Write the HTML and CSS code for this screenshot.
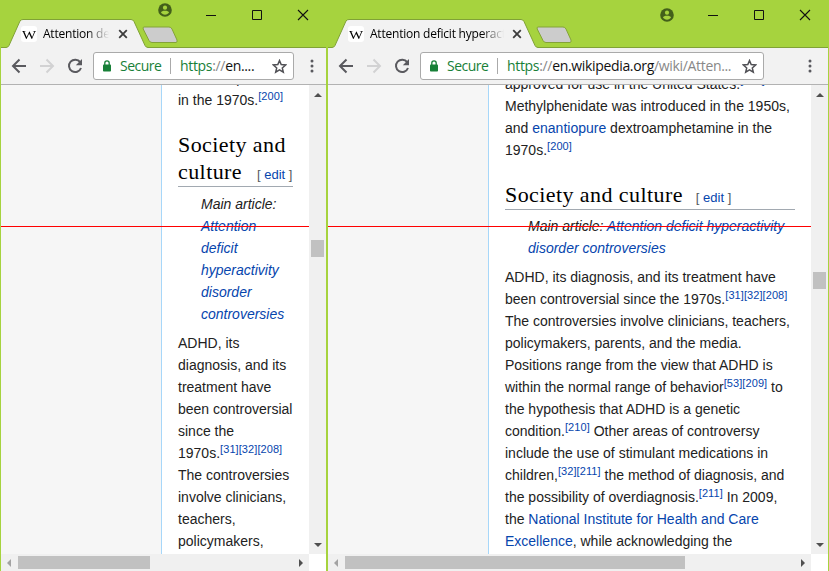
FILE: index.html
```
<!DOCTYPE html>
<html lang="en">
<head>
<meta charset="utf-8">
<title>Attention deficit hyperactivity disorder</title>
<link rel="stylesheet" href="styles.css">
</head>
<body>
<svg class="defs" width="0" height="0">
  <symbol id="user" viewBox="0 0 14 14"><circle cx="7" cy="7" r="6.8" fill="#43601a"/><circle cx="7" cy="4.7" r="2.1" fill="#a6d33e"/><path d="M3 9.7C3.3 7.2 10.7 7.2 11 9.7Q7 13.6 3 9.7Z" fill="#a6d33e"/></symbol>
  <symbol id="min" viewBox="0 0 12 12"><path d="M1 6.5H11" stroke="#111"/></symbol>
  <symbol id="max" viewBox="0 0 12 12"><path d="M1.5 1.5H10.5V10.5H1.5Z" fill="none" stroke="#111"/></symbol>
  <symbol id="close" viewBox="0 0 12 12"><path d="M1 1L11 11M11 1L1 11" fill="none" stroke="#111" stroke-width="1.1"/></symbol>
  <symbol id="tabclose" viewBox="0 0 10 10"><path d="M1.2 1.2L8.8 8.8M8.8 1.2L1.2 8.8" fill="none" stroke="#3c3c3c" stroke-width="1.8"/></symbol>
  <symbol id="back" viewBox="0 0 16 16"><path d="M15 8H2.5M8.5 1.5L2 8L8.5 14.5" fill="none" stroke="currentColor" stroke-width="2"/></symbol>
  <symbol id="reload" viewBox="0 0 16 16"><path d="M13.2 4.2A6.2 6.2 0 1 0 14 10" fill="none" stroke="#5a5a5f" stroke-width="2"/><path d="M15 1V7.2H8.8Z" fill="#5a5a5f"/></symbol>
  <symbol id="lock" viewBox="0 0 10 12"><rect x="1" y="4.5" width="8" height="7" rx=".8" fill="#188038"/><path d="M2.8 5V3A2.2 2.2 0 0 1 7.2 3V5" fill="none" stroke="#188038" stroke-width="1.3"/></symbol>
  <symbol id="star" viewBox="0 0 15 15"><path d="M7.5 1.6L9.2 5.6L13.6 6L10.3 8.9L11.3 13.2L7.5 10.9L3.7 13.2L4.7 8.9L1.4 6L5.8 5.6Z" fill="none" stroke="#505055" stroke-width="1.5"/></symbol>
  <symbol id="dots" viewBox="0 0 4 14"><circle cx="2" cy="2" r="1.5" fill="#5a5a5f"/><circle cx="2" cy="7" r="1.5" fill="#5a5a5f"/><circle cx="2" cy="12" r="1.5" fill="#5a5a5f"/></symbol>
  <symbol id="newtab" viewBox="0 0 36 18"><path d="M2 1H27Q29 1 30 3L35 14Q35.5 16.5 34 16.5H10Q8 16.5 7 14.5L1.2 3Q.7 1 2 1Z" fill="#ccc" stroke="#84a338"/></symbol>
</svg>
<main class="desktop">
  <section class="window narrow">
    <header class="strip">
      <div class="tab">
        <svg class="tab-shape" width="146" height="29" viewBox="0 0 146 29"><path d="M0 28.5H1Q3 28.5 4 26.5L15 2Q16 .5 18 .5H126Q128 .5 129 2.5L140 26.5Q141 28.5 143 28.5H146V29H0Z" fill="#f2f2f2"/><path d="M0 28.5H1Q3 28.5 4 26.5L15 2Q16 .5 18 .5H126Q128 .5 129 2.5L140 26.5Q141 28.5 143 28.5H146" fill="none" stroke="#80a236"/></svg>
        <div class="tab-body"><span class="fav"><span>W</span></span><span class="title">Attention deficit</span><svg width="10" height="10"><use href="#tabclose"/></svg></div>
      </div>
      <svg class="newtab" width="36" height="18"><use href="#newtab"/></svg>
      <div class="controls"><svg class="user" width="14" height="14"><use href="#user"/></svg><svg width="12" height="12"><use href="#min"/></svg><svg width="12" height="12"><use href="#max"/></svg><svg width="12" height="12"><use href="#close"/></svg></div>
    </header>
    <nav class="toolbar">
      <svg class="back" width="16" height="16"><use href="#back"/></svg><svg class="forward" width="16" height="16"><use href="#back"/></svg><svg class="reload" width="16" height="16"><use href="#reload"/></svg>
      <div class="address"><svg class="lock" width="10" height="12"><use href="#lock"/></svg><span class="secure">Secure</span><i class="sep"></i><span class="url"><b>https</b><em>://</em>en....</span><svg class="star" width="15" height="15"><use href="#star"/></svg></div>
      <svg class="dots" width="4" height="14"><use href="#dots"/></svg>
    </nav>
    <div class="page">
      <div class="sidebar"></div>
      <article class="content">
        <p>dextroamphetamine<br>in the 1970s.<sup>[200]</sup></p>
        <h2><span>Society and<br>culture</span><small>[ <a>edit</a> ]</small></h2>
        <p class="note">Main article:<br><a>Attention<br>deficit<br>hyperactivity<br>disorder<br>controversies</a></p>
        <p>ADHD, its<br>diagnosis, and its<br>treatment have<br>been controversial<br>since the<br>1970s.<sup>[31][32][208]</sup><br>The controversies<br>involve clinicians,<br>teachers,<br>policymakers,</p>
      </article>
      <div class="vscroll"><i class="up"></i><i class="thumb"></i><i class="down"></i></div>
      <div class="marker"></div>
    </div>
    <div class="hscroll"><div class="track"><i class="prev"></i><i class="thumb"></i><i class="next"></i></div></div>
  </section>
  <section class="window wide">
    <header class="strip">
      <div class="tab">
        <svg class="tab-shape" width="213" height="29" viewBox="0 0 213 29"><path d="M0 28.5H4Q6 28.5 7 26.5L18 2Q19 .5 21 .5H193Q195 .5 196 2.5L207 26.5Q208 28.5 210 28.5H213V29H0Z" fill="#f2f2f2"/><path d="M0 28.5H4Q6 28.5 7 26.5L18 2Q19 .5 21 .5H193Q195 .5 196 2.5L207 26.5Q208 28.5 210 28.5H213" fill="none" stroke="#80a236"/></svg>
        <div class="tab-body"><span class="fav"><span>W</span></span><span class="title">Attention deficit hyperactivity</span><svg width="10" height="10"><use href="#tabclose"/></svg></div>
      </div>
      <svg class="newtab" width="36" height="18"><use href="#newtab"/></svg>
      <div class="controls"><svg class="user" width="14" height="14"><use href="#user"/></svg><svg width="12" height="12"><use href="#min"/></svg><svg width="12" height="12"><use href="#max"/></svg><svg width="12" height="12"><use href="#close"/></svg></div>
    </header>
    <nav class="toolbar">
      <svg class="back" width="16" height="16"><use href="#back"/></svg><svg class="forward" width="16" height="16"><use href="#back"/></svg><svg class="reload" width="16" height="16"><use href="#reload"/></svg>
      <div class="address"><svg class="lock" width="10" height="12"><use href="#lock"/></svg><span class="secure">Secure</span><i class="sep"></i><span class="url"><b>https</b><em>://</em>en.wikipedia.org<em>/wiki/Atten...</em></span><svg class="star" width="15" height="15"><use href="#star"/></svg></div>
      <svg class="dots" width="4" height="14"><use href="#dots"/></svg>
    </nav>
    <div class="page">
      <div class="sidebar"></div>
      <article class="content">
        <p>approved for use in the United States.<sup>[199]</sup><br>Methylphenidate was introduced in the 1950s,<br>and <a>enantiopure</a> dextroamphetamine in the<br>1970s.<sup>[200]</sup></p>
        <h2><span>Society and culture</span><small>[ <a>edit</a> ]</small></h2>
        <p class="note">Main article: <a>Attention deficit hyperactivity<br>disorder controversies</a></p>
        <p>ADHD, its diagnosis, and its treatment have<br>been controversial since the 1970s.<sup>[31][32][208]</sup><br>The controversies involve clinicians, teachers,<br>policymakers, parents, and the media.<br>Positions range from the view that ADHD is<br>within the normal range of behavior<sup>[53][209]</sup> to<br>the hypothesis that ADHD is a genetic<br>condition.<sup>[210]</sup> Other areas of controversy<br>include the use of stimulant medications in<br>children,<sup>[32][211]</sup> the method of diagnosis, and<br>the possibility of overdiagnosis.<sup>[211]</sup> In 2009,<br>the <a>National Institute for Health and Care<br>Excellence</a>, while acknowledging the</p>
      </article>
      <div class="vscroll"><i class="up"></i><i class="thumb"></i><i class="down"></i></div>
      <div class="marker"></div>
    </div>
    <div class="hscroll"><div class="track"><i class="prev"></i><i class="thumb"></i><i class="next"></i></div></div>
  </section>
</main>
</body>
</html>
```
FILE: styles.css
```
* { box-sizing: border-box; }
body { margin: 0; overflow: hidden; font-family: "Liberation Sans", Arial, sans-serif; }
svg { display: block; flex: none; }
.defs { position: absolute; }
.desktop { display: flex; width: 829px; height: 571px; }
.window { display: flex; flex-direction: column; height: 571px; border: solid #a6d33e; border-width: 0 1px; background: #f2f2f2; }
.narrow { width: 327px; }
.wide { width: 502px; }
.strip { height: 48px; flex: none; display: flex; align-items: flex-end; background: linear-gradient(#80a236, #80a236) bottom / 100% 1px no-repeat #a6d33e; }
.tab { position: relative; height: 29px; flex: none; }
.narrow .tab { width: 146px; margin-left: 4px; }
.wide .tab { width: 213px; }
.tab-body { position: absolute; inset: 0; display: flex; align-items: center; padding-left: 16px; }
.wide .tab-body { padding-left: 20px; }
.fav { width: 16px; height: 16px; margin-right: 6px; flex: none; border-radius: 3px; background: #fff; font: 13px/17px "Liberation Serif", serif; display: flex; justify-content: center; }
.fav span { transform: scaleX(1.15); }
.title { flex: none; width: 66px; margin-right: 9px; overflow: hidden; white-space: nowrap; font: 12px/18px "Open Sans", sans-serif; letter-spacing: -.22px; -webkit-mask-image: linear-gradient(to right, #000 calc(100% - 22px), transparent); }
.wide .title { width: 134px; margin-right: 8px; }
.newtab { margin: 0 0 4px -9px; }
.wide .newtab { margin-left: -5px; }
.controls { margin-left: auto; height: 48px; flex: none; display: flex; gap: 34px; padding: 9px 17px 0 0; }
.narrow .controls { margin-left: -20px; }
.user { margin: -6px -1px 0 0; }
.wide .user { margin-top: -1px; }
.toolbar { height: 37px; flex: none; display: flex; align-items: center; border-bottom: 1px solid #b2b2b2; padding-left: 10px; color: #5a5a5f; }
.forward { margin-left: 12px; color: #d2d2d3; transform: scaleX(-1); }
.reload { margin-left: 12px; }
.address { width: 201px; height: 28px; margin-left: 10px; border: 1px solid #aaa; border-radius: 3px; background: #fff; display: flex; align-items: center; font: 14px/20px "Open Sans", sans-serif; white-space: nowrap; padding-left: 8px; }
.wide .address { width: 344px; }
.secure { width: 43px; margin-left: 8px; color: #188038; letter-spacing: -.5px; }
.sep { width: 1px; height: 16px; margin: 0 9px 0 7px; background: #aaa; }
.url { color: #111; letter-spacing: -.33px; }
.url b { font-weight: 400; color: #188038; }
.url em { font-style: normal; color: #888; }
.star { margin: 0 6px 0 auto; }
.dots { margin: 0 12px 0 auto; }
.wide .dots { margin-right: 16px; }
.page { position: relative; height: 469px; flex: none; display: flex; background: #fff; overflow: hidden; }
.sidebar { width: 161px; flex: none; background: #f6f6f6; border-right: 1px solid #a7d7f9; }
.content { flex: 1; padding-left: 16px; font-size: 14px; line-height: 22px; color: #222; white-space: nowrap; }
.narrow .content { margin-top: -18px; }
.wide .content { margin-top: -12px; }
p { margin: 0; }
a, sup { color: #0645ad; }
sup { font-size: 11px; line-height: 1; vertical-align: 5px; letter-spacing: .08px; }
h2 { width: 115px; height: 57px; margin: 19px 0 6px; padding-bottom: 1px; border-bottom: 1px solid #a2a9b1; color: #000; font: 22px/27px Georgia, "Liberation Serif", serif; letter-spacing: .42px; display: flex; align-items: flex-end; }
.wide h2 { width: 290px; height: 30px; margin: 19px 0 5px; }
h2 small { font: 13px/20px "Liberation Sans", sans-serif; letter-spacing: 0; margin-left: 13px; color: #54595d; }
.narrow h2 span { width: 66px; }
.note { padding-left: 23px; margin-bottom: 7px; font-style: italic; }
.vscroll { width: 17px; flex: none; background: #f0f0f0; display: flex; flex-direction: column; align-items: center; }
.up, .down { border: 4px solid transparent; }
.up { border-bottom-color: #505050; border-top-width: 0; margin-top: 8px; }
.down { border-top-color: #505050; border-bottom-width: 0; margin: auto 0 7px; }
.thumb { background: #c1c1c1; }
.vscroll .thumb { width: 13px; height: 17px; margin-top: 143px; }
.wide .vscroll .thumb { margin-top: 175px; }
.marker { position: absolute; left: -1px; right: 17px; top: 141px; height: 1px; background: #f00; }
.hscroll { height: 17px; flex: none; background: #fff; padding-right: 17px; }
.track { height: 17px; background: #f0f0f0; display: flex; align-items: center; }
.prev, .next { border: 4px solid transparent; }
.prev { border-right-color: #a3a3a3; border-left-width: 0; margin-left: 6px; }
.next { border-left-color: #505050; border-right-width: 0; margin: 0 6px 0 auto; }
.hscroll .thumb { width: 132px; height: 13px; margin-left: 7px; }
.wide .hscroll .thumb { width: 340px; }
```
